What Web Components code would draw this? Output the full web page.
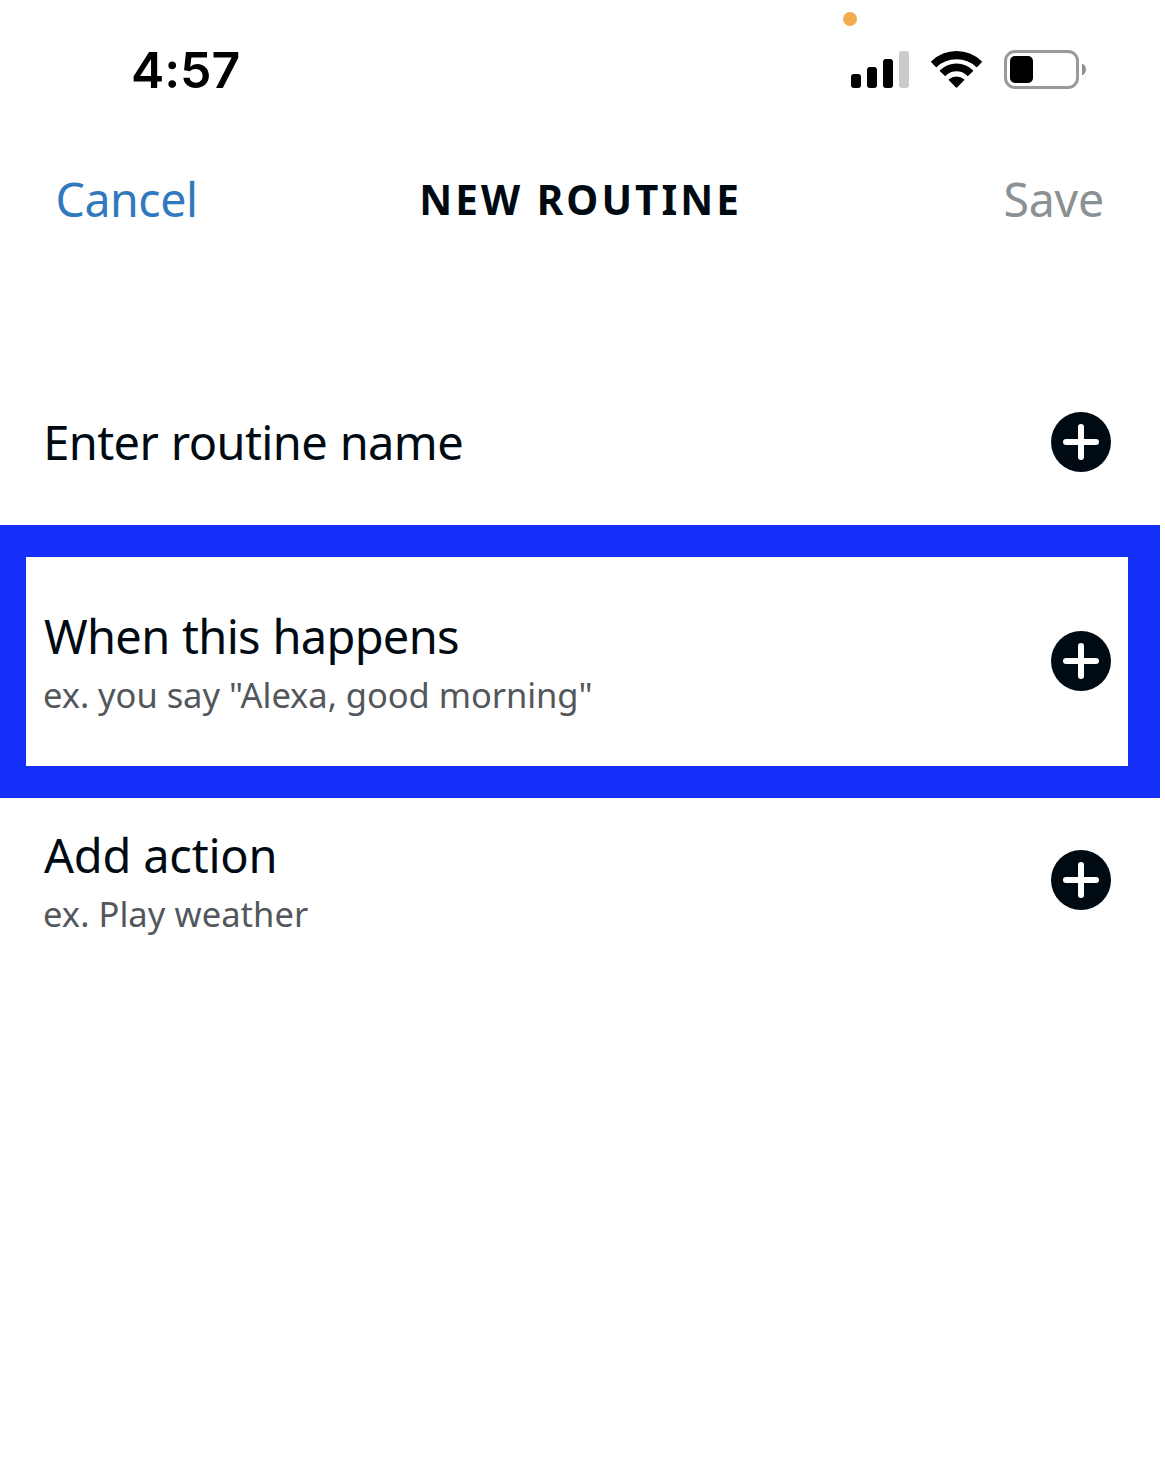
<!DOCTYPE html>
<html lang="en">
<head>
<meta charset="utf-8">
<title>New Routine</title>
<style>
html,body{margin:0;background:#fff}
body{font-family:"Noto Sans","Open Sans",sans-serif;color:#000a12}
</style>
</head>
<body>
<routine-screen></routine-screen>
<script>
const define = (name, html, setup) => {
  const t = document.createElement('template');
  t.innerHTML = html;
  customElements.define(name, class extends HTMLElement {
    constructor() {
      super();
      this.attachShadow({mode: 'open'}).append(t.content.cloneNode(true));
    }
    connectedCallback() { if (setup) setup(this); }
  });
};

/* Text whose visible glyphs span exactly `span` pixels, by tracking;
   `gap` widens each space between words. */
define('tracked-text', `<style>
:host{display:block;white-space:nowrap}
span{display:block}
</style><span></span>`, el => {
  const span = el.shadowRoot.querySelector('span');
  const text = el.getAttribute('text');
  span.textContent = text;
  const cs = getComputedStyle(el);
  const ctx = document.createElement('canvas').getContext('2d');
  ctx.font = cs.fontWeight + ' ' + cs.fontSize + ' ' + cs.fontFamily;
  const m = ctx.measureText(text);
  const gap = +(el.getAttribute('gap') || 0);
  const ink = m.actualBoundingBoxLeft + m.actualBoundingBoxRight + gap * (text.split(' ').length - 1);
  const target = +el.getAttribute('span');
  span.style.letterSpacing = ((target - ink) / (text.length - 1)).toFixed(3) + 'px';
  span.style.wordSpacing = gap + 'px';
  span.style.marginLeft = m.actualBoundingBoxLeft.toFixed(2) + 'px';
  el.style.width = target + 'px';
});

define('signal-icon', `<style>:host{display:block;width:58px;height:37px}svg{display:block}</style>
<svg width="58" height="37"><rect y="23" width="10" height="14" rx="3"/><rect x="16" y="16" width="10" height="21" rx="3"/><rect x="32" y="8" width="10" height="29" rx="3"/><rect x="48" width="10" height="37" rx="3" fill="#cbcbcb"/></svg>`);

define('wifi-icon', `<style>:host{display:block;width:51px;height:37px}svg{display:block}</style>
<svg width="51" height="37" viewBox="0 0 51 37" stroke="#000" stroke-width="1.4" stroke-linejoin="round">
<path d="M.8 10.7C15-2.6 36-2.6 50.2 10.7L45.7 15.4C34.5 4.9 16.500 4.900 5.300 15.400Z"/>
<path d="M9.500 19.800C18.500 11 32.500 11 41.500 19.800L36.800 24.200C30.300 18 20.700 18 14.200 24.200Z"/>
<path d="M18.400 28.800C22.400 25.400 28.600 25.400 32.600 28.800L25.500 36.100Z"/></svg>`);

define('battery-icon', `<style>:host{display:block;width:82px;height:39px}svg{display:block}</style>
<svg width="82" height="39"><rect x="1.500" y="1.500" width="72" height="36" rx="9.500" fill="none" stroke="#999" stroke-width="3"/><rect x="6" y="6" width="23" height="27" rx="5"/><path d="M78 13.500C83.300 15.500 83.300 23.500 78 25.500Z" fill="#8f8f8f"/></svg>`);

define('status-bar', `<style>
:host{display:flex;position:relative;box-sizing:border-box;height:138px;padding:40px 79px 38px 133px;align-items:center;justify-content:space-between;font-family:Inter,sans-serif;color:#000}
tracked-text{font-size:50px;font-weight:600;line-height:60px}
.icons{display:flex;align-items:center;gap:22px;margin-bottom:1px;padding-bottom:1px}
i{position:absolute;left:843px;top:12px;width:14px;height:14px;border-radius:50%;background:#f2ad4e}
</style><i></i><tracked-text text="4:57" span="105.500"></tracked-text>
<div class="icons"><signal-icon></signal-icon><wifi-icon></wifi-icon><battery-icon></battery-icon></div>`);

define('nav-bar', `<style>
:host{display:flex;box-sizing:border-box;height:120px;padding:2px 63px 0 57.500px;align-items:center;justify-content:space-between;line-height:60px}
.cancel,.save{font-size:46.500px}
.cancel{color:#3079bd}.save{color:#8b9092}
.title{font-size:40.500px;font-weight:700;margin-left:-41px;padding-top:2px}
</style><tracked-text class="cancel" text="Cancel" span="137.500"></tracked-text>
<tracked-text class="title" text="NEW ROUTINE" span="315"></tracked-text>
<tracked-text class="save" text="Save" span="96.500"></tracked-text>`);

define('add-button', `<style>:host{display:block;width:60px;height:60px}svg{display:block}</style>
<svg width="60" height="60"><circle cx="30" cy="30" r="30" fill="#000a12"/><path d="M15 30H45M30 15V45" stroke="#fff" stroke-width="6" stroke-linecap="round"/></svg>`);

define('routine-row', `<style>
:host{display:flex;box-sizing:border-box;align-items:center;justify-content:space-between;height:var(--row-height);padding:0 54px 0 44px}
:host([highlighted]){width:1160px;border:solid #1530f8;border-width:32px 32px 32px 26px;padding:0 17px 1px 18px}
div{padding-top:var(--text-drop,0)}
</style><div><slot></slot></div><add-button></add-button>`);

define('routine-screen', `<style>
:host{display:flex;flex-direction:column;width:1165px;height:1478px;background:#fff;overflow:hidden}
main{display:flex;flex-direction:column;padding-top:101px}
.head{font-size:47px;font-weight:450;line-height:64px}
.name{margin-left:3.200px}
.hint{font-size:34.500px;line-height:54px;color:#53575c}
</style><status-bar></status-bar><nav-bar></nav-bar>
<main>
<routine-row style="--row-height:166px"><tracked-text class="head name" text="Enter routine name" span="415" gap="1"></tracked-text></routine-row>
<routine-row highlighted style="--row-height:273px;--text-drop:3px"><tracked-text class="head" text="When this happens" span="414" gap="1"></tracked-text><tracked-text class="hint" text='ex. you say "Alexa, good morning"' span="546.500"></tracked-text></routine-row>
<routine-row style="--row-height:164px;--text-drop:4px"><tracked-text class="head" text="Add action" span="230.500"></tracked-text><tracked-text class="hint" text="ex. Play weather" span="264"></tracked-text></routine-row>
</main>`);
</script>
</body>
</html>
